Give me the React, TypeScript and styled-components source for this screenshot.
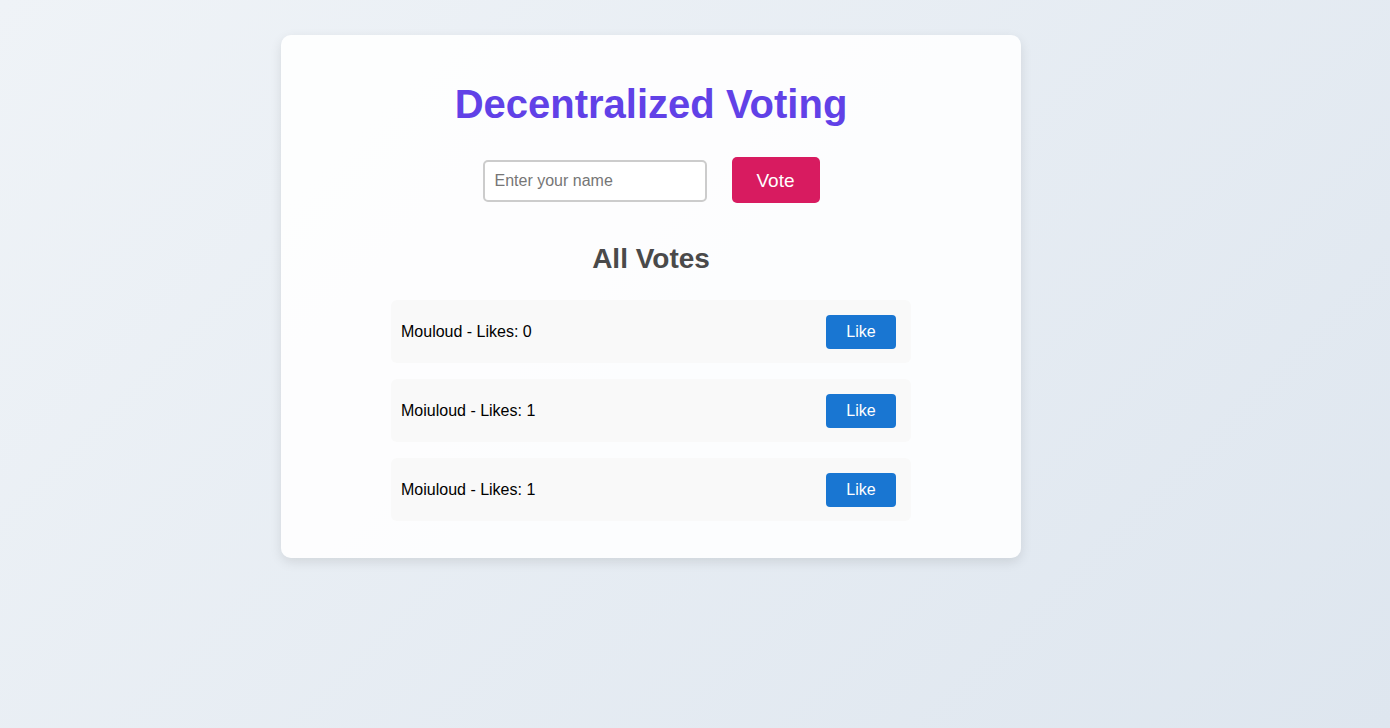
import styled, { createGlobalStyle } from 'styled-components'

interface Vote {
  name: string
  likes: number
}

const votes: Vote[] = [
  { name: 'Mouloud', likes: 0 },
  { name: 'Moiuloud', likes: 1 },
  { name: 'Moiuloud', likes: 1 },
]

const GlobalStyle = createGlobalStyle({
  '*': {
    boxSizing: 'border-box',
  },
  'html, body': {
    margin: 0,
    padding: 0,
    minHeight: '100%',
  },
  body: {
    fontFamily: '"Liberation Sans", Arial, sans-serif',
    background: 'linear-gradient(135deg, #eff3f7 0%, #dee6ef 100%)',
    minHeight: '728px',
  },
})

const Page = styled.div({
  minHeight: '728px',
  padding: '35px 0 0 281px',
  display: 'flex',
  alignItems: 'flex-start',
})

const Card = styled.main({
  width: 740,
  padding: 20,
  background: 'rgba(255, 255, 255, 0.88)',
  borderRadius: 10,
  boxShadow: '0 4px 12px rgba(0, 0, 0, 0.1)',
  display: 'flex',
  flexDirection: 'column',
  alignItems: 'center',
})

const Title = styled.h1({
  margin: '27px 0 30px',
  fontSize: 40,
  fontWeight: 700,
  color: '#6141e7',
})

const Form = styled.div({
  display: 'flex',
  alignItems: 'flex-start',
  gap: 25,
})

const NameInput = styled.input({
  width: 224,
  height: 42,
  marginTop: 3,
  padding: '0 10px',
  border: '2px solid #cccccc',
  borderRadius: 5,
  fontFamily: 'inherit',
  fontSize: 16,
  color: '#333',
  background: '#fff',
  outline: 'none',
  '&::placeholder': {
    color: '#767676',
  },
})

const Button = styled.button<{ $tone: string }>(({ $tone }) => ({
  border: 'none',
  color: '#fff',
  background: $tone,
  fontFamily: 'inherit',
  cursor: 'pointer',
  lineHeight: 1,
}))

const VoteButton = styled(Button)({
  width: 88,
  height: 46,
  borderRadius: 5,
  fontSize: 19,
})

const LikeButton = styled(Button)({
  width: 70,
  height: 34,
  borderRadius: 4,
  fontSize: 16,
})

const Subtitle = styled.h2({
  margin: '40px 0 25px',
  fontSize: 28,
  fontWeight: 700,
  color: '#4a4a4a',
})

const List = styled.ul({
  listStyle: 'none',
  margin: '0 0 17px',
  padding: 0,
  width: 520,
  display: 'flex',
  flexDirection: 'column',
  gap: 16,
})

const Item = styled.li({
  height: 63,
  padding: '0 15px 0 10px',
  background: '#f9f9f9',
  borderRadius: 6,
  display: 'flex',
  alignItems: 'center',
  justifyContent: 'space-between',
  fontSize: 16,
  color: '#000',
})

export default function App() {
  return (
    <>
      <GlobalStyle />
      <Page>
        <Card>
          <Title>Decentralized Voting</Title>
          <Form>
            <NameInput type="text" placeholder="Enter your name" />
            <VoteButton $tone="#d81b60">Vote</VoteButton>
          </Form>
          <Subtitle>All Votes</Subtitle>
          <List>
            {votes.map((v, i) => (
              <Item key={i}>
                <span>
                  {v.name} - Likes: {v.likes}
                </span>
                <LikeButton $tone="#1976d2">Like</LikeButton>
              </Item>
            ))}
          </List>
        </Card>
      </Page>
    </>
  )
}
